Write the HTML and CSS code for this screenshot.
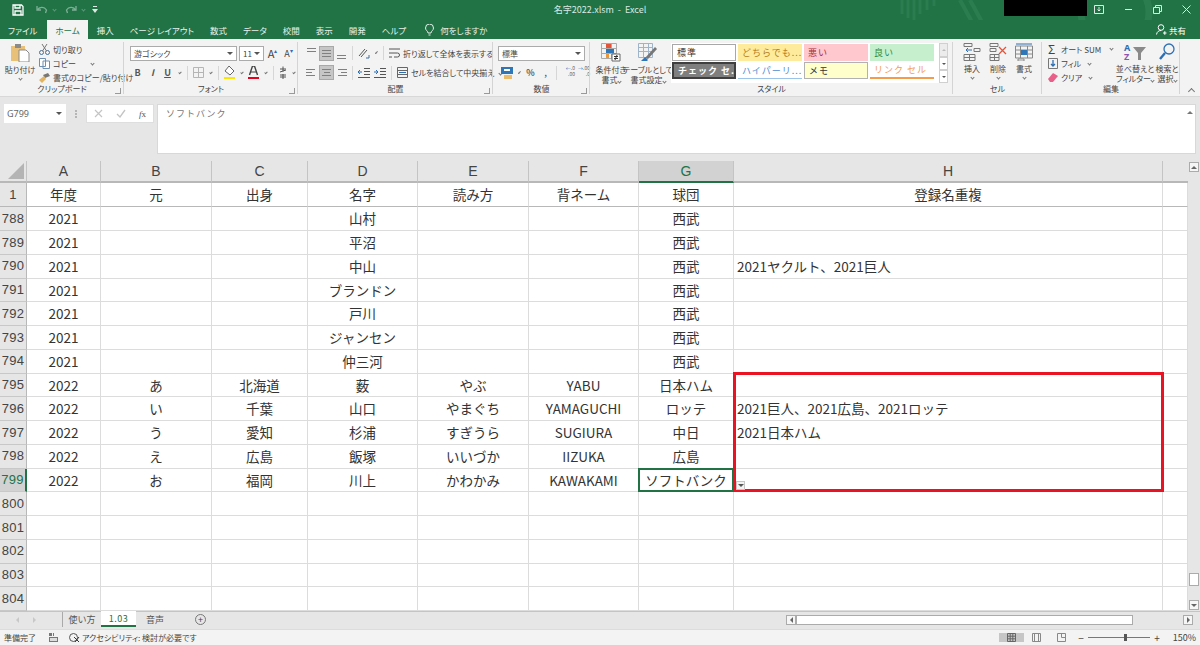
FILE: index.html
```html
<!DOCTYPE html>
<html lang="ja">

<head>
    <meta charset="UTF-8">
    <title>名字2022.xlsm - Excel</title>
    <link rel="stylesheet" href="styles.css">
</head>

<body>

    <header class="titlebar">
        <svg class="decor" width="300" height="40" viewBox="0 0 300 40" fill="none" stroke="#2b7d50">
            <path d="M2 0v14M8 0v18M14 0v20M20 0v14M27 0v10M34 0v6" stroke-width="3"/>
            <path d="M60 0l12 22M70 0l12 22" stroke-width="4"/>
            <circle cx="215" cy="12" r="34" stroke-width="7"/>
        </svg>
        <div class="qat">
            <svg width="12" height="12" viewBox="0 0 12 12" fill="none" stroke="#fff" stroke-width="1.3"><path d="M1 1h8.500L11 2.500V11H1zM3 1v3h5V1M3 11V7h6v4"/></svg>
            <svg class="dim" width="12" height="10" viewBox="0 0 12 10" fill="none" stroke="#7fb096" stroke-width="1.3"><path d="M1 1v4h4M1.500 5C3 2 8 1 10.500 5l-1 3"/></svg>
            <i class="caret dimcaret"></i>
            <svg class="dim" width="12" height="10" viewBox="0 0 12 10" fill="none" stroke="#7fb096" stroke-width="1.3"><path d="M11 1v4H7M10.500 5C9 2 4 1 1.500 5l1 3"/></svg>
            <i class="caret dimcaret"></i>
            <svg width="6" height="7" viewBox="0 0 6 7" fill="#dfeae4"><path d="M1 0h4v1H1zM0 3h6L3 7z"/></svg>
        </div>
        <div class="doc-title">名字2022.xlsm &nbsp;-&nbsp; Excel</div>
        <div class="win-area">
            <div class="blackout"></div>
            <div class="win-btns">
                <svg width="10" height="9" viewBox="0 0 10 9" fill="none" stroke="#dfeae4"><path d="M.5.500h9v8h-9zM5 2v4M3.500 4.500L5 6l1.500-1.500" /></svg>
                <svg width="9" height="9" viewBox="0 0 9 9" stroke="#dfeae4"><path d="M1 4.500h7"/></svg>
                <svg width="9" height="9" viewBox="0 0 9 9" fill="none" stroke="#dfeae4"><path d="M.5 2.500h6v6h-6zM2.500 2.500v-2h6v6h-2"/></svg>
                <svg width="9" height="9" viewBox="0 0 9 9" stroke="#dfeae4"><path d="M.5.500l8 8M8.500.500l-8 8"/></svg>
            </div>
        </div>
    </header>

    <nav class="tabs">
        <span class="tab first">ファイル</span>
        <span class="tab active">ホーム</span>
        <span class="tab">挿入</span>
        <span class="tab">ページ レイアウト</span>
        <span class="tab">数式</span>
        <span class="tab">データ</span>
        <span class="tab">校閲</span>
        <span class="tab">表示</span>
        <span class="tab">開発</span>
        <span class="tab">ヘルプ</span>
        <svg class="bulb" width="9" height="12" viewBox="0 0 9 12" fill="none" stroke="#e4efe9"><path d="M3 9C3 7 .5 6.500.5 4a4 4 0 0 1 8 0C8.500 6.500 6 7 6 9zM3.500 11h2"/></svg>
        <span class="tell">何をしますか</span>
        <span class="share">
            <svg width="11" height="11" viewBox="0 0 11 11" fill="none" stroke="#fff"><circle cx="5" cy="3.500" r="2.800"/><path d="M.5 10.500C1 7.500 3 6.500 5 6.500M7 9h3.500M8.800 7.200V10.800"/></svg>
            共有
        </span>
    </nav>

    <section class="ribbon">

        <div class="group g-clip">
            <div class="group-body">
                <div class="big paste">
                    <svg width="20" height="19" viewBox="0 0 20 19"><path d="M1 3h14v15H1z" fill="#e8c078"/><path d="M5 1h6v4H5z" fill="#8a8a8a"/><path d="M9 7h7l3 3v9H9z" fill="#fff" stroke="#8a8a8a"/></svg>
                    <span>貼り付け</span>
                    <i class="caret"></i>
                </div>
                <div class="stack">
                    <div class="line"><svg width="11" height="12" viewBox="0 0 11 12" fill="none" stroke="#3f6f9f"><circle cx="2.500" cy="9.500" r="2"/><circle cx="8.500" cy="9.500" r="2"/><path d="M3.500 8L8 1M7.500 8L3 1" stroke="#777"/></svg>切り取り</div>
                    <div class="line"><svg width="11" height="11" viewBox="0 0 11 11" fill="#fff" stroke="#6f8fb0"><path d="M.5.500h6v8h-6zM4 3h6.500v7.500H4z"/></svg>コピー<i class="caret copy-caret"></i></div>
                    <div class="line"><svg width="11" height="10" viewBox="0 0 11 10"><path d="M4 2l5-2 2 3-5 2z" fill="#777"/><path d="M0 7l5-4 2 3-4 4z" fill="#e3b45f"/></svg>書式のコピー/貼り付け</div>
                </div>
            </div>
            <div class="group-label">クリップボード</div>
            <i class="launcher"></i>
        </div>

        <div class="group g-font">
            <div class="group-body col">
                <div class="tools first-row">
                    <div class="select font-name">游ゴシック<i class="caret solid"></i></div>
                    <div class="select font-size">11<i class="caret solid"></i></div>
                    <span class="tool letter">A<sup>▴</sup></span>
                    <span class="tool letter small">A<sup>▾</sup></span>
                </div>
                <div class="tools">
                    <span class="tool fmt"><b>B</b></span>
                    <span class="tool fmt"><b><em>I</em></b></span>
                    <span class="tool fmt"><b class="under">U</b></span>
                    <i class="caret"></i>
                    <i class="vsep"></i>
                    <svg class="ic" width="11" height="11" viewBox="0 0 11 11" fill="none" stroke="#b5b5b5"><path d="M.5.500h10v10H.5zM5.500.500v10M.5 5.500h10"/></svg>
                    <i class="caret"></i>
                    <i class="vsep"></i>
                    <svg class="ic" width="11" height="13" viewBox="0 0 11 13"><path d="M5 0l5 5-4 4-5-4z" fill="#fff" stroke="#666"/><path d="M0 11h11v2H0z" fill="#ffe600"/></svg>
                    <i class="caret"></i>
                    <svg class="ic color" width="11" height="13" viewBox="0 0 11 13"><path d="M1.500 9l3-9h2l3 9" fill="none" stroke="#444" stroke-width="1.400"/><path d="M3 6h5" stroke="#444"/><path d="M0 11h11v2H0z" fill="#e6001e"/></svg>
                    <i class="caret"></i>
                    <i class="vsep"></i>
                    <svg class="ic" width="8" height="13" viewBox="0 0 8 13" fill="none" stroke="#555"><path d="M1 3h6M4 .5v5M1 6l6-2M1 9h6M1 11h6M4 8v5"/></svg>
                    <i class="caret"></i>
                </div>
            </div>
            <div class="group-label">フォント</div>
            <i class="launcher"></i>
        </div>

        <div class="group g-align">
            <div class="group-body col">
                <div class="tools first-row">
                    <span class="tool lines top"><i></i><i></i></span>
                    <span class="tool lines on mid"><i></i><i></i><i></i></span>
                    <span class="tool lines bot"><i></i><i></i></span>
                    <i class="vsep"></i>
                    <svg class="ic" width="12" height="11" viewBox="0 0 12 11" fill="none" stroke="#555"><path d="M1 8l6-7M3 9l6-7"/><path d="M8 10h3V7" stroke="#3f6f9f"/></svg>
                    <i class="caret"></i>
                    <i class="vsep"></i>
                    <svg class="ic" width="11" height="11" viewBox="0 0 11 11" fill="none" stroke="#555"><path d="M0 1h11M0 5h8.500a2 2 0 0 1 0 4H5M0 9h3"/></svg>
                    <span class="wide-label">折り返して全体を表示する</span>
                </div>
                <div class="tools">
                    <span class="tool lines left"><i></i><i></i><i></i></span>
                    <span class="tool lines on center"><i></i><i></i><i></i></span>
                    <span class="tool lines right"><i></i><i></i><i></i></span>
                    <i class="vsep"></i>
                    <svg class="ic" width="12" height="10" viewBox="0 0 12 10" fill="none" stroke="#555"><path d="M6 .5h6M6 3.500h6M6 6.500h6M0 9.500h12"/><path d="M4 4H0M2 2L0 4l2 2" stroke="#2d6fb4"/></svg>
                    <svg class="ic" width="12" height="10" viewBox="0 0 12 10" fill="none" stroke="#555"><path d="M6 .5h6M6 3.500h6M6 6.500h6M0 9.500h12"/><path d="M0 4h4M2 2l2 2-2 2" stroke="#2d6fb4"/></svg>
                    <i class="vsep"></i>
                    <svg class="ic" width="11" height="11" viewBox="0 0 11 11" fill="none" stroke="#666"><path d="M.5.500h10v10H.5zM.5 3.500h10M.5 7.500h10"/><path d="M2 5.500h7" stroke="#2d6fb4"/></svg>
                    <span class="wide-label">セルを結合して中央揃え<i class="caret"></i></span>
                </div>
            </div>
            <div class="group-label">配置</div>
            <i class="launcher"></i>
        </div>

        <div class="group g-num">
            <div class="group-body col">
                <div class="tools first-row">
                    <div class="select num-format">標準<i class="caret solid"></i></div>
                </div>
                <div class="tools">
                    <svg class="ic" width="12" height="12" viewBox="0 0 12 12"><path d="M0 0h12v7H0z" fill="#2f76b8"/><path d="M3 8h8v4H3z" fill="#e9bb6a"/><path d="M3 3h6" stroke="#fff" stroke-width="2"/></svg>
                    <i class="caret"></i>
                    <span class="tool sym">%</span>
                    <span class="tool sym">,</span>
                    <i class="vsep"></i>
                    <span class="tool dec"><u>←</u>.0<br>.00</span>
                    <span class="tool dec"><u>→</u>.00<br>.0</span>
                </div>
            </div>
            <div class="group-label">数値</div>
            <i class="launcher"></i>
        </div>

        <div class="group g-style">
            <div class="group-body">
                <div class="big cond">
                    <svg width="20" height="19" viewBox="0 0 20 19" fill="none" stroke="#aaa"><path d="M.5.500h15v15H.5zM.5 5.500h15M.5 10.500h15M5.500.500v15M10.500.500v15"/><path d="M5 1h5v4H5z" fill="#e2553a" stroke="none"/><path d="M5 6h8v4H5z" fill="#2f76b8" stroke="none"/><path d="M5 11h3v4H5z" fill="#e9973a" stroke="none"/><path d="M11 11h8v7h-8z" fill="#fff" stroke="#666"/><path d="M13 13.500h4M13 15.500h4M16 12l-2 5" stroke="#333"/></svg>
                    <span>条件付き<br>書式<i class="caret inline"></i></span>
                </div>
                <div class="big table-fmt">
                    <svg width="20" height="19" viewBox="0 0 20 19" fill="none" stroke="#9fb4ca"><path d="M.5.500h14v14H.5zM.5 4.500h14M.5 8.500h14M5.500.500v14M10.500.500v14"/><path d="M7 15L17 4l2 2-9 10z" fill="#777" stroke="none"/><path d="M3 18l4-4 3 3-1 1z" fill="#2f76b8" stroke="none"/></svg>
                    <span>テーブルとして<br>書式設定<i class="caret inline"></i></span>
                </div>
                <div class="gallery">
                    <div class="style-grid">
                        <span class="cs normal">標準</span>
                        <span class="cs neutral">どちらでも...</span>
                        <span class="cs bad">悪い</span>
                        <span class="cs good">良い</span>
                        <span class="cs check">チェック セ...</span>
                        <span class="cs link">ハイパーリ...</span>
                        <span class="cs memo">メモ</span>
                        <span class="cs linked">リンク セル</span>
                    </div>
                    <div class="gallery-scroll">
                        <i class="up"></i>
                        <i class="down"></i>
                        <i class="more"></i>
                    </div>
                </div>
            </div>
            <div class="group-label">スタイル</div>
        </div>

        <div class="group g-cell">
            <div class="group-body cell-btns">
                <div class="big">
                    <svg width="18" height="18" viewBox="0 0 18 18" fill="none" stroke="#777"><path d="M1 .5h8v3H1zM1 11.500h11v6H1zM6.500 11.500v6M1 14.500h11M11 5.500h6v3h-6z"/><path d="M9 7H3M5 5L3 7l2 2" stroke="#2d6fb4"/></svg>
                    <span>挿入</span>
                    <i class="caret"></i>
                </div>
                <div class="big">
                    <svg width="18" height="18" viewBox="0 0 18 18" fill="none" stroke="#777"><path d="M1 .5h8v3H1zM1 5.500h6v3H1zM1 11.500h9v6H1zM5.500 11.500v6M1 14.500h9"/><path d="M10 4l7 7M17 4l-7 7" stroke="#e2553a" stroke-width="1.300"/></svg>
                    <span>削除</span>
                    <i class="caret"></i>
                </div>
                <div class="big">
                    <svg width="18" height="18" viewBox="0 0 18 18" fill="none" stroke="#888"><path d="M.5 3h17v12H.5zM.5 7h17M.5 11h17M5.500 3v12M12.500 3v12"/><path d="M6 7h6v5H6z" fill="#2f76b8" stroke="none"/><path d="M1 1h16" stroke="#2d6fb4"/><path d="M3 18h6v-2H3z" fill="#fff"/></svg>
                    <span>書式</span>
                    <i class="caret"></i>
                </div>
            </div>
            <div class="group-label">セル</div>
        </div>

        <div class="group g-edit">
            <div class="group-body">
                <div class="stack edit-stack">
                    <div class="line"><span class="sigma">Σ</span>オート SUM<i class="caret sum-caret"></i></div>
                    <div class="line"><svg width="10" height="11" viewBox="0 0 10 11" fill="none" stroke="#777"><path d="M.5.500h9v10h-9z"/><path d="M5 2v6M3 6l2 2 2-2" stroke="#2d6fb4" stroke-width="1.300"/></svg>フィル<i class="caret"></i></div>
                    <div class="line"><svg width="10" height="9" viewBox="0 0 10 9"><path d="M0 6l5-6 5 3-5 6H2z" fill="#e8608a"/></svg>クリア<i class="caret"></i></div>
                </div>
                <div class="big sort">
                    <svg width="24" height="18" viewBox="0 0 24 18" fill="none"><text x="1" y="8" font-size="9" font-weight="700" fill="#2d6fb4" font-family="Noto Sans">A</text><text x="1" y="17" font-size="9" font-weight="700" fill="#8a55b0" font-family="Noto Sans">Z</text><path d="M10 4h13l-5 6v7h-3v-7z" fill="#8a8a8a"/></svg>
                    <span>並べ替えと<br>フィルター<i class="caret inline"></i></span>
                </div>
                <div class="big find">
                    <svg width="16" height="18" viewBox="0 0 16 18" fill="none" stroke="#2d6fb4"><circle cx="10" cy="6" r="5" stroke-width="1.300"/><path d="M6 10l-5 6" stroke-width="2.400"/></svg>
                    <span>検索と<br>選択<i class="caret inline"></i></span>
                </div>
            </div>
            <div class="group-label">編集</div>
        </div>

        <div class="collapse"><i></i></div>
    </section>

    <section class="formula-row">
        <div class="namebox">G799<i class="caret solid"></i></div>
        <div class="grip"></div>
        <div class="fx-box">
            <svg width="9" height="9" viewBox="0 0 9 9" stroke="#c4c4c4" stroke-width="1.200"><path d="M1 1l7 7M8 1L1 8"/></svg>
            <svg width="10" height="9" viewBox="0 0 10 9" fill="none" stroke="#c4c4c4" stroke-width="1.300"><path d="M1 5l3 3 5-7"/></svg>
            <span class="fx"><em>f</em>x</span>
        </div>
        <div class="formula">ソフトバンク<i class="expand"></i></div>
    </section>

    <section class="sheet">
        <div class="grid">
            <div class="row head">
                <div class="corner"><i></i></div>
                <div>A</div><div>B</div><div>C</div><div>D</div><div>E</div><div>F</div><div class="picked">G</div><div>H</div><div></div>
            </div>
            <div class="row first">
                <div class="num">1</div>
                <div>年度</div><div>元</div><div>出身</div><div>名字</div><div>読み方</div><div>背ネーム</div><div>球団</div><div>登録名重複</div><div></div>
            </div>
            <div class="row"><div class="num">788</div><div>2021</div><div></div><div></div><div>山村</div><div></div><div></div><div>西武</div><div></div><div></div></div>
            <div class="row"><div class="num">789</div><div>2021</div><div></div><div></div><div>平沼</div><div></div><div></div><div>西武</div><div></div><div></div></div>
            <div class="row"><div class="num">790</div><div>2021</div><div></div><div></div><div>中山</div><div></div><div></div><div>西武</div><div class="left">2021ヤクルト、2021巨人</div><div></div></div>
            <div class="row"><div class="num">791</div><div>2021</div><div></div><div></div><div>ブランドン</div><div></div><div></div><div>西武</div><div></div><div></div></div>
            <div class="row"><div class="num">792</div><div>2021</div><div></div><div></div><div>戸川</div><div></div><div></div><div>西武</div><div></div><div></div></div>
            <div class="row"><div class="num">793</div><div>2021</div><div></div><div></div><div>ジャンセン</div><div></div><div></div><div>西武</div><div></div><div></div></div>
            <div class="row"><div class="num">794</div><div>2021</div><div></div><div></div><div>仲三河</div><div></div><div></div><div>西武</div><div></div><div></div></div>
            <div class="row"><div class="num">795</div><div>2022</div><div>あ</div><div>北海道</div><div>薮</div><div>やぶ</div><div>YABU</div><div>日本ハム</div><div></div><div></div></div>
            <div class="row"><div class="num">796</div><div>2022</div><div>い</div><div>千葉</div><div>山口</div><div>やまぐち</div><div>YAMAGUCHI</div><div>ロッテ</div><div class="left">2021巨人、2021広島、2021ロッテ</div><div></div></div>
            <div class="row"><div class="num">797</div><div>2022</div><div>う</div><div>愛知</div><div>杉浦</div><div>すぎうら</div><div>SUGIURA</div><div>中日</div><div class="left">2021日本ハム</div><div></div></div>
            <div class="row"><div class="num">798</div><div>2022</div><div>え</div><div>広島</div><div>飯塚</div><div>いいづか</div><div>IIZUKA</div><div>広島</div><div></div><div></div></div>
            <div class="row"><div class="num cur">799</div><div>2022</div><div>お</div><div>福岡</div><div>川上</div><div>かわかみ</div><div>KAWAKAMI</div><div>ソフトバンク</div><div></div><div></div></div>
            <div class="row"><div class="num">800</div><div></div><div></div><div></div><div></div><div></div><div></div><div></div><div></div><div></div></div>
            <div class="row"><div class="num">801</div><div></div><div></div><div></div><div></div><div></div><div></div><div></div><div></div><div></div></div>
            <div class="row"><div class="num">802</div><div></div><div></div><div></div><div></div><div></div><div></div><div></div><div></div><div></div></div>
            <div class="row"><div class="num">803</div><div></div><div></div><div></div><div></div><div></div><div></div><div></div><div></div><div></div></div>
            <div class="row"><div class="num">804</div><div></div><div></div><div></div><div></div><div></div><div></div><div></div><div></div><div></div></div>

            <!-- 選択セルと赤枠はセルの上に重ねる -->
            <div class="selection"></div>
            <div class="redbox"></div>
            <div class="autofill"><i class="caret solid"></i></div>
        </div>
        <div class="vscroll">
            <span class="sbtn"><i class="tri-up"></i></span>
            <span class="vthumb"></span>
            <span class="sbtn"><i class="tri-down"></i></span>
        </div>
    </section>

    <section class="sheetbar">
        <div class="sheet-nav"><i class="tri-left"></i><i class="tri-right"></i></div>
        <div class="sheet-tab">使い方</div>
        <div class="sheet-tab current">1.03</div>
        <div class="sheet-tab">音声</div>
        <div class="add-sheet">+</div>
        <div class="hscroll">
            <span class="sbtn"><i class="tri-left dark"></i></span>
            <span class="hthumb"></span>
            <span class="sbtn"><i class="tri-right dark"></i></span>
        </div>
    </section>

    <footer class="status">
        <span class="ready">準備完了</span>
        <svg class="macro" width="9" height="9" viewBox="0 0 9 9" fill="#777"><path d="M0 0h3v3H0zM4 0h1v3H4zM0 4h9v5H0z"/><path d="M1 5h7v3H1z" fill="#ddd"/></svg>
        <svg class="acc" width="11" height="10" viewBox="0 0 11 10" fill="none" stroke="#555"><circle cx="4.500" cy="4.500" r="4"/><path d="M5 4l5 5M10 4L6 9" stroke="#333"/></svg>
        <span>アクセシビリティ: 検討が必要です</span>
        <div class="view-btns">
            <span class="view on"><svg width="9" height="9" viewBox="0 0 9 9" fill="none" stroke="#666"><path d="M.5.500h8v8h-8zM3.200.500v8M5.800.500v8M.5 3.200h8M.5 5.800h8"/></svg></span>
            <span class="view"><svg width="9" height="9" viewBox="0 0 9 9" fill="none" stroke="#888"><path d="M.5.500h8v8h-8zM2.500.500v8M6.500.500v8"/></svg></span>
            <span class="view"><svg width="9" height="9" viewBox="0 0 9 9" fill="none" stroke="#888"><path d="M.5.500h8v8h-8zM4.500.500v4h4"/></svg></span>
        </div>
        <span class="zoom-sign">−</span>
        <div class="zoom-track"><i></i></div>
        <span class="zoom-sign">+</span>
        <span class="zoom-value">150%</span>
    </footer>

</body>

</html>
```

FILE: styles.css
```css
* {
    box-sizing: border-box;
}

html,
body {
    height: 645px;
}

body {
    margin: 0;
    overflow: hidden;
    display: flex;
    flex-direction: column;
    background: #e6e6e6;
    color: #444;
    font-family: "Noto Sans CJK JP", "Noto Sans", sans-serif;
    font-size: 8px;
    font-feature-settings: "palt";
}

i {
    font-style: normal;
}

/* 小さい山形 */
.caret {
    display: inline-block;
    width: 3px;
    height: 3px;
    margin: 0 3px 1px 4px;
    border-right: 1px solid #777;
    border-bottom: 1px solid #777;
    transform: rotate(45deg);
}

.caret.solid {
    width: 0;
    height: 0;
    margin: 0;
    border: 3px solid transparent;
    border-top: 3px solid #555;
    border-bottom: 0;
    transform: none;
}

.caret.inline {
    margin: 0 0 1px 3px;
}

/* タイトルバー */
.titlebar {
    position: relative;
    display: grid;
    grid-template-columns: 1fr auto 1fr;
    align-items: center;
    height: 20px;
    background: #217346;
    color: #dbe9e1;
    font-size: 9px;
}

.decor {
    position: absolute;
    left: 900px;
    top: 0;
}

.qat {
    display: flex;
    align-items: center;
    gap: 0;
    padding-left: 12px;
    position: relative;
}

.qat svg {
    margin-right: 3px;
}

.qat .dim {
    margin-left: 9px;
    margin-right: 0;
}

.qat svg:last-child {
    margin-left: 7px;
}

.dimcaret {
    border-color: #5f9c7b;
    margin: 0 0 1px 5px;
}

.doc-title {
    position: relative;
}

.win-area {
    position: relative;
    display: flex;
    justify-content: flex-end;
}

.blackout {
    position: absolute;
    left: 358px;
    top: -10px;
    width: 83px;
    height: 21px;
    background: #000;
}

.win-btns {
    display: flex;
    gap: 20px;
    padding-right: 9px;
}

/* タブ */
.tabs {
    position: relative;
    display: flex;
    align-items: center;
    height: 20px;
    padding-left: 8px;
    background: #217346;
    color: #e9f2ed;
    font-size: 8.500px;
}

.tab {
    margin-right: 16px;
}

.tab.first {
    margin-right: 10px;
}

.tab.active {
    align-self: stretch;
    display: flex;
    align-items: center;
    margin-right: 9px;
    padding: 0 8px;
    background: #f3f3f3;
    color: #217346;
}

.bulb {
    margin-left: 3px;
    margin-right: 6px;
}

.share {
    margin-left: auto;
    margin-right: 14px;
    display: flex;
    align-items: center;
    gap: 2px;
    color: #fff;
}

/* リボン */
.ribbon {
    position: relative;
    display: flex;
    height: 58px;
    background: #f3f3f3;
    border-bottom: 1px solid #d8d8d8;
}

.group {
    position: relative;
    display: flex;
    flex-direction: column;
    padding-top: 4px;
}

.group::after {
    content: "";
    position: absolute;
    right: 0;
    top: 3px;
    bottom: 2px;
    width: 1px;
    background: #d4d4d4;
}

.group-body {
    flex: 1;
    display: flex;
    min-height: 0;
}

.group-body.col {
    flex-direction: column;
    padding-top: 2px;
}

.group-label {
    height: 14px;
    line-height: 13px;
    text-align: center;
}

.launcher {
    position: absolute;
    right: 3px;
    bottom: 2px;
    width: 6px;
    height: 6px;
    border-left: 1px solid #999;
    border-bottom: 1px solid #999;
    transform: scaleX(-1);
}

.g-clip {
    width: 124px;
}

.g-font {
    width: 174px;
}

.g-align {
    width: 195px;
}

.g-num {
    width: 97px;
}

.g-style {
    width: 363px;
}

.g-cell {
    width: 89px;
}

.g-edit {
    width: 138px;
}

.big {
    display: flex;
    flex-direction: column;
    align-items: center;
    line-height: 10px;
    text-align: center;
    white-space: nowrap;
}

.big svg {
    flex: none;
    margin-bottom: 3px;
}

.big .caret {
    margin: 2px 0 0;
}

.paste {
    width: 30px;
    margin-left: 5px;
}

.stack {
    display: flex;
    flex-direction: column;
    gap: 3px;
    margin-left: 4px;
    padding-top: 0;
}

.line {
    display: flex;
    align-items: center;
    gap: 3px;
    height: 12px;
    white-space: nowrap;
}

.copy-caret {
    margin-left: 12px;
}

.tools {
    display: flex;
    align-items: center;
    height: 15px;
    padding-left: 6px;
    white-space: nowrap;
}

.first-row {
    height: 16px;
    margin-bottom: 4px;
}

.select {
    display: flex;
    align-items: center;
    justify-content: space-between;
    height: 15px;
    padding: 0 3px;
    background: #fff;
    border: 1px solid #ababab;
    font-size: 8px;
}

.font-name {
    width: 107px;
}

.font-size {
    width: 25px;
    margin-left: 2px;
}

.num-format {
    width: 87px;
    margin-left: -1px;
}

.tool {
    display: inline-flex;
    align-items: center;
    justify-content: center;
    flex: none;
    width: 15px;
    height: 15px;
}

.letter {
    margin-left: 1px;
    font-size: 11px;
}

.letter sup {
    font-size: 6px;
    color: #2d6fb4;
    margin-top: -6px;
}

.letter.small {
    font-size: 9px;
}

.fmt {
    font-size: 9px;
    color: #555;
}

.under {
    text-decoration: underline;
}

.vsep {
    flex: none;
    width: 1px;
    height: 14px;
    margin: 0 3px;
    background: #d6d6d6;
}

.ic {
    flex: none;
    margin: 0 2px;
}

.lines {
    display: inline-flex;
    flex-direction: column;
    gap: 2px;
    padding: 2px;
}

.lines i {
    display: block;
    width: 9px;
    height: 1px;
    background: #808080;
}

.lines.top {
    justify-content: flex-start;
}

.lines.bot {
    justify-content: flex-end;
}

.lines.left i:nth-child(2) {
    width: 6px;
}

.lines.left {
    align-items: flex-start;
}

.lines.right {
    align-items: flex-end;
}

.lines.right i:nth-child(2) {
    width: 6px;
}

.lines.center i:nth-child(2) {
    width: 6px;
}

.lines.center,
.lines.mid {
    justify-content: center;
    align-items: center;
}

.lines.on {
    background: #c6c6c6;
    border: 1px solid #a8a8a8;
}

.wide-label {
    margin-left: 1px;
}

.sym {
    font-size: 9px;
    font-weight: 500;
}

.dec {
    display: block;
    font-size: 5px;
    line-height: 6px;
    text-align: right;
    color: #666;
}

.dec u {
    text-decoration: none;
    color: #2d6fb4;
    font-size: 5px;
}

.cond {
    width: 32px;
    margin-left: 5px;
}

.table-fmt {
    width: 42px;
}

.gallery {
    display: flex;
    height: 40px;
    margin-left: 2px;
    background: #fff;
}

.style-grid {
    display: grid;
    grid-template-columns: repeat(4, 64px);
    grid-template-rows: 17px 17px;
    column-gap: 2px;
    row-gap: 1px;
    padding: 1px 1px 0;
    font-size: 9px;
    letter-spacing: 1px;
    font-feature-settings: normal;
}

.cs {
    display: flex;
    align-items: center;
    padding: 0 4px;
    white-space: nowrap;
    overflow: hidden;
}

.normal {
    border: 1px solid #a8a8a8;
    background: #fff;
    color: #333;
}

.neutral {
    background: #ffeb9c;
    color: #b37b1c;
}

.bad {
    background: #ffc7ce;
    color: #a8323f;
}

.good {
    background: #c6efce;
    color: #2f8a3c;
}

.check {
    background: #7f7f7f;
    border: 2px solid #3f3f3f;
    color: #fff;
    font-weight: 700;
}

.link {
    color: #4f8ed0;
    border-bottom: 1px solid #9cc3e8;
}

.memo {
    background: #ffffcc;
    border: 1px solid #b2b2b2;
    color: #333;
}

.linked {
    color: #f59b4c;
    border-bottom: 2px solid #f59b4c;
}

.gallery-scroll {
    display: flex;
    flex-direction: column;
    width: 9px;
    margin-left: 4px;
    background: #f3f3f3;
}

.gallery-scroll i {
    flex: 1;
    border: 1px solid #d0d0d0;
    background: #fff;
    position: relative;
}

.gallery-scroll .up {
    background: #ececec;
}

.gallery-scroll i::after {
    content: "";
    position: absolute;
    left: 1.500px;
    top: 5px;
    border: 2px solid transparent;
    border-top: 2px solid #555;
    border-bottom: 0;
}

.gallery-scroll .up::after {
    border-top: 0;
    border-bottom: 2px solid #bbb;
}

.cell-btns {
    gap: 8px;
    padding-left: 10px;
}

.cell-btns .big {
    width: 18px;
}

.cell-btns .big:first-child {
    margin-left: 0;
}

.edit-stack {
    width: 69px;
    margin-left: 6px;
    flex: none;
}

.sigma {
    width: 10px;
    font-size: 12px;
    line-height: 12px;
    color: #444;
}

.sum-caret {
    margin-left: 6px;
}

.sort {
    width: 36px;
    margin-left: 0;
}

.find {
    width: 24px;
    margin-left: 2px;
}

.collapse {
    flex: 1;
    position: relative;
}

.collapse i {
    position: absolute;
    right: 6px;
    bottom: 2px;
    width: 5px;
    height: 5px;
    border-left: 1px solid #777;
    border-top: 1px solid #777;
    transform: rotate(45deg);
}

/* 数式バー */
.formula-row {
    display: flex;
    height: 64px;
    padding: 7px 4px;
    background: #e6e6e6;
    align-items: flex-start;
}

.namebox {
    display: flex;
    align-items: center;
    justify-content: space-between;
    width: 62px;
    height: 19px;
    padding: 0 4px 0 3px;
    background: #fff;
    font-size: 9px;
    color: #666;
    font-family: "Noto Sans", sans-serif;
}

.grip {
    width: 2px;
    height: 8px;
    margin: 6px 9px 0 9px;
    border-left: 2px dotted #b5b5b5;
}

.fx-box {
    display: flex;
    align-items: center;
    justify-content: space-between;
    width: 68px;
    height: 19px;
    margin-right: 3px;
    padding: 0 7px 0 7px;
    background: #fff;
    border: 1px solid #dedede;
}

.fx {
    font-family: "Liberation Serif", serif;
    font-size: 9px;
    color: #555;
}

.formula {
    position: relative;
    flex: 1;
    height: 50px;
    padding: 2px 8px;
    background: #fff;
    border: 1px solid #d8d8d8;
    font-size: 9px;
    letter-spacing: 1px;
    color: #777;
    font-feature-settings: normal;
}

.expand {
    position: absolute;
    right: 2px;
    top: 6px;
    border: 3px solid transparent;
    border-bottom: 3px solid #777;
    border-top: 0;
}

/* シート */
.sheet {
    display: flex;
    height: 451px;
    background: #fff;
}

.grid {
    position: relative;
    flex: none;
    width: 1188px;
    overflow: hidden;
    font-size: 13.500px;
    color: #333;
    font-feature-settings: normal;
}

.row {
    display: grid;
    grid-template-columns: 27px 74px 111px 96px 110px 111px 110px 95px 429px 25px;
    height: 23.750px;
}

.row > div {
    display: flex;
    align-items: center;
    justify-content: center;
    border-right: 1px solid #dcdcdc;
    border-bottom: 1px solid #dcdcdc;
    white-space: nowrap;
    padding-bottom: 1px;
}

.row.head {
    height: 22px;
}

.row.first {
    height: 24px;
}

.row.head > div {
    background: #e6e6e6;
    border-right-color: #c4c4c4;
    border-bottom: 2px solid #b8b8b8;
    color: #444;
    font-family: "Liberation Sans", sans-serif;
    font-size: 14px;
}

.row.head > div:last-child {
    border-right: 0;
}

.row.first > div {
    border-bottom: 1px solid #b8b8b8;
}

.row > .num {
    background: #e6e6e6;
    border-right: 1px solid #b8b8b8;
    border-bottom-color: #c8c8c8;
    color: #444;
    font-size: 13px;
    font-family: "Liberation Sans", sans-serif;
    letter-spacing: .3px;
}

.row > .num.cur {
    background: #d2d2d2;
    color: #217346;
    border-right: 2px solid #217346;
}

.row.head > .picked {
    background: #d2d2d2;
    border-bottom: 2px solid #217346;
    color: #217346;
}

.row > .left {
    justify-content: flex-start;
    padding-left: 3px;
}

.corner {
    position: relative;
}

.corner i {
    position: absolute;
    right: 2px;
    bottom: 2px;
    border-style: solid;
    border-width: 0 0 16px 16px;
    border-color: transparent transparent #b4b4b4 transparent;
}

.selection {
    position: absolute;
    left: 638px;
    top: 307px;
    width: 96px;
    height: 24px;
    border: 2px solid #217346;
}

.redbox {
    position: absolute;
    left: 733px;
    top: 211px;
    width: 431px;
    height: 120px;
    border: 3px solid #ea1323;
}

.autofill {
    position: absolute;
    left: 736px;
    top: 320px;
    display: flex;
    align-items: center;
    justify-content: center;
    width: 9px;
    height: 9px;
    background: #f3f3f3;
    border: 1px solid #c6c6c6;
}

/* スクロールバー */
.vscroll {
    flex: 1;
    display: flex;
    flex-direction: column;
    align-items: center;
    padding: 1px 0;
    background: #e6e6e6;
}

.sbtn {
    display: flex;
    align-items: center;
    justify-content: center;
    flex: none;
    width: 10px;
    height: 10px;
    background: #f6f6f6;
    border: 1px solid #ababab;
}

.vthumb {
    width: 10px;
    height: 13px;
    margin-top: auto;
    margin-bottom: 14px;
    background: #fff;
    border: 1px solid #ababab;
}

.tri-up,
.tri-down,
.tri-left,
.tri-right {
    display: block;
    width: 0;
    height: 0;
    border: 3px solid transparent;
}

.tri-up {
    border-top: 0;
    border-bottom: 3px solid #666;
}

.tri-down {
    border-bottom: 0;
    border-top: 3px solid #666;
}

.tri-left {
    border-left: 0;
    border-right: 3px solid #c8c8c8;
}

.tri-right {
    border-right: 0;
    border-left: 3px solid #c8c8c8;
}

.tri-left.dark {
    border-right-color: #666;
}

.tri-right.dark {
    border-left-color: #666;
}

/* シートタブ */
.sheetbar {
    display: flex;
    align-items: flex-start;
    height: 18px;
    background: #e6e6e6;
    border-top: 1px solid #c4c4c4;
    font-size: 9px;
}

.sheet-nav {
    display: flex;
    align-items: center;
    gap: 14px;
    width: 63px;
    height: 15px;
    padding-left: 16px;
    border-right: 1px solid #aaa;
}

.sheet-tab {
    display: flex;
    align-items: center;
    justify-content: center;
    height: 15px;
    width: 38px;
    color: #555;
    font-feature-settings: normal;
}

.sheet-tab.current {
    width: 35px;
    height: 16px;
    margin-top: -1px;
    background: #fff;
    border-bottom: 2px solid #217346;
    color: #217346;
    letter-spacing: .5px;
}

.sheet-tab:last-of-type {
    width: 31px;
    border-right: 1px solid #aaa;
}

.add-sheet {
    display: flex;
    align-items: center;
    justify-content: center;
    width: 11px;
    height: 11px;
    margin: 2px 0 0 21px;
    border: 1px solid #777;
    border-radius: 50%;
    font-size: 9px;
    line-height: 9px;
}

.hscroll {
    display: flex;
    align-items: center;
    width: 407px;
    height: 11px;
    margin: 2px 0 0 580px;
}

.hthumb {
    width: 337px;
    height: 10px;
    background: #fff;
    border: 1px solid #ababab;
    margin-right: auto;
}

/* ステータスバー */
.status {
    flex: 1;
    display: flex;
    align-items: center;
    padding-left: 4px;
    background: #f3f3f3;
    border-top: 1px solid #dcdcdc;
}

.macro {
    margin-left: 13px;
}

.acc {
    margin: 0 2px 0 11px;
}

.view-btns {
    display: flex;
    align-items: center;
    align-self: stretch;
    margin-left: auto;
}

.view {
    display: flex;
    align-items: center;
    justify-content: center;
    width: 25px;
}

.view.on {
    background: #c6c6c6;
}

.zoom-sign {
    width: 10px;
    margin: 0 2px;
    text-align: center;
    font-size: 10px;
}

.zoom-track {
    position: relative;
    width: 62px;
    height: 1px;
    background: #777;
}

.zoom-track i {
    position: absolute;
    left: 36px;
    top: -3px;
    width: 3px;
    height: 7px;
    background: #555;
}

.zoom-value {
    width: 36px;
    padding-right: 4px;
    text-align: right;
    font-size: 9px;
}
```
